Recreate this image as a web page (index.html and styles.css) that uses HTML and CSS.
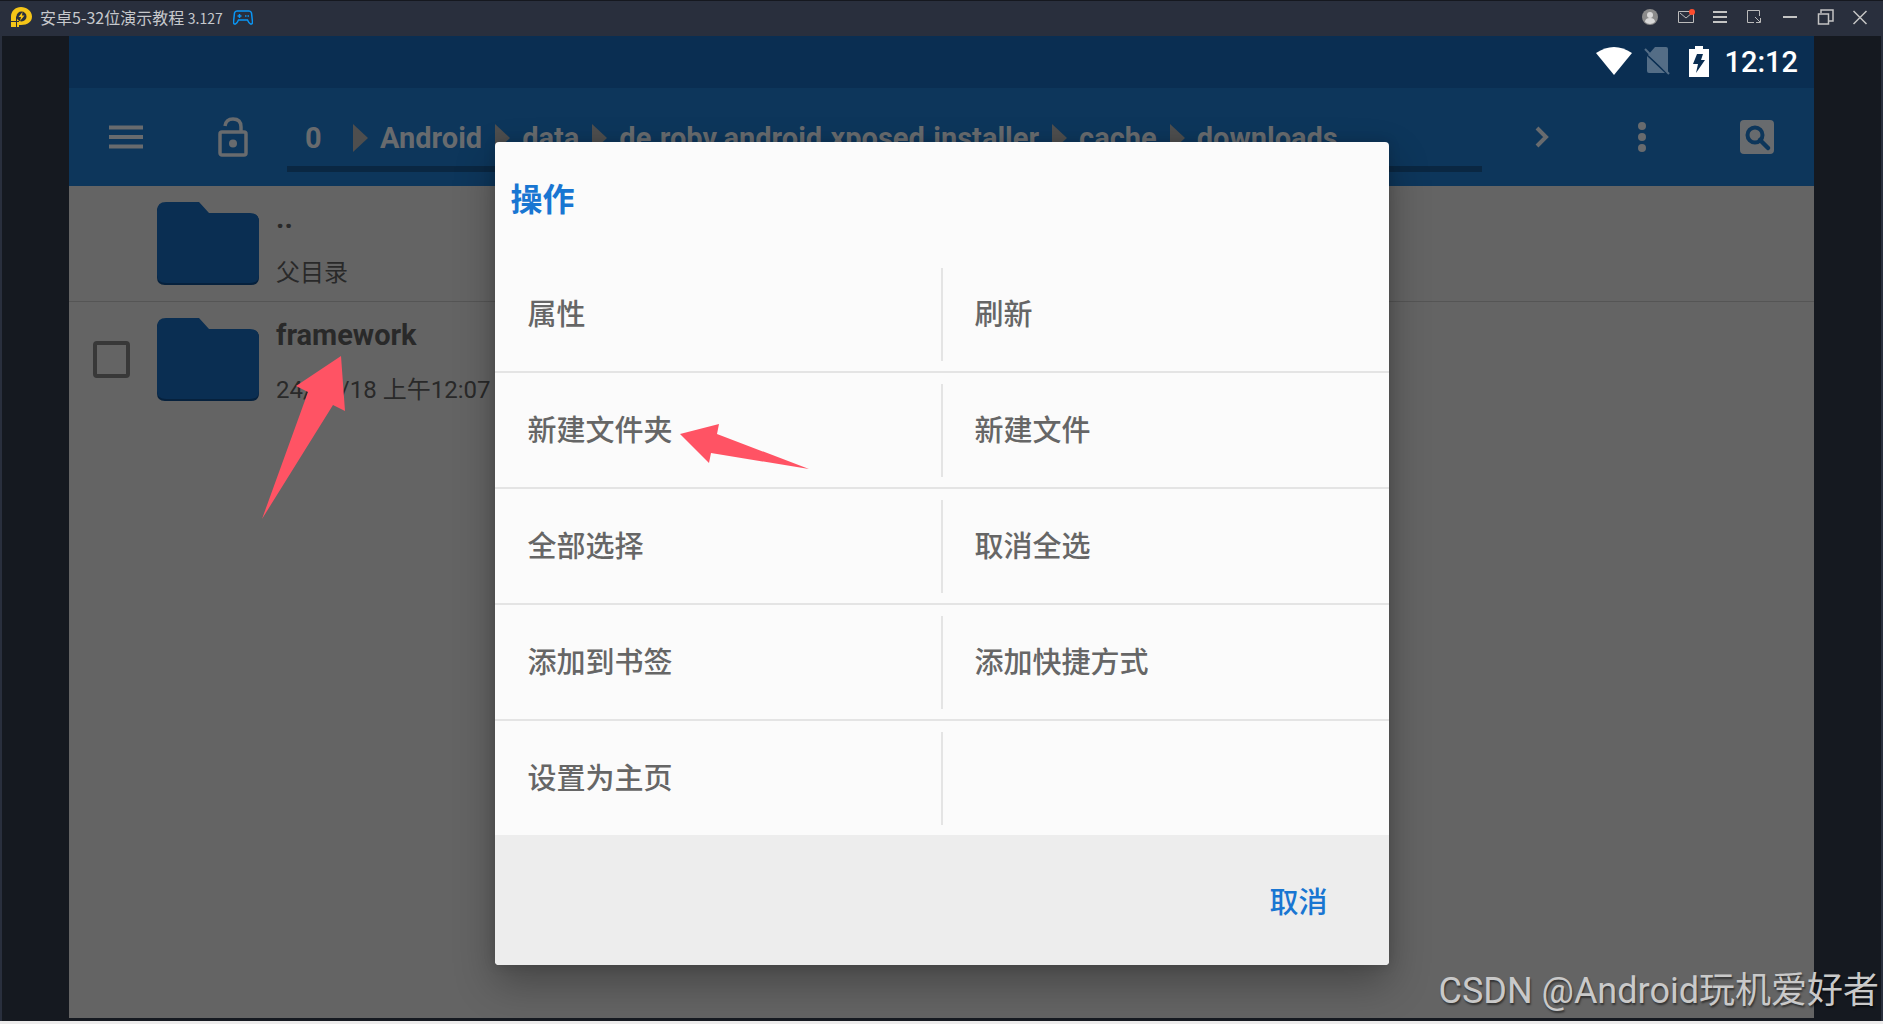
FILE: index.html
```html
<!DOCTYPE html>
<html lang="zh-CN">
<head>
	<meta charset="utf-8">
	<title>安卓5-32位演示教程</title>
	<link rel="stylesheet" href="styles.css">
</head>
<body>
	<header class="titlebar">
		<svg class="logo" viewBox="0 0 22 20">
			<path fill="#f5c518" d="M1 9.500C1 4 5.500 0 11 0S22 4 22 9.500 17.500 18 11 18H9v2H1z"/>
			<path fill="none" stroke="#292f3d" d="M6.500 20V9.500M1 14.500h8"/>
			<circle cx="11.500" cy="9.500" r="5" fill="#292f3d"/>
			<path fill="#f5c518" d="M12.500 5L8.500 10h2.500l-1 4 4.500-5.500H12z"/>
		</svg>
		<span class="title">安卓5-32位演示教程 <small>3.127</small></span>
		<svg class="pad" viewBox="0 0 20 15" fill="none" stroke="#0a96f5" stroke-width="1.500">
			<path d="M4 1h12q2 0 2.500 2l1 9q0 2.500-2 2-1.500-.5-3-4H5.500q-1.500 3.500-3 4-2 .5-2-2l1-9Q2 1 4 1z"/>
			<path d="M6.500 4v4M4.500 6h4M12 6h1.500M14.500 6H16"/>
		</svg>
		<div class="winbtns">
			<button aria-label="用户"><svg viewBox="0 0 20 20"><circle cx="10" cy="10" r="8" fill="#8b8b8b"/><circle cx="10" cy="8" r="3" fill="#d8d8d8"/><path fill="#d8d8d8" d="M5 15q0-4 5-4t5 4q-5 4-10 0z"/></svg></button>
			<button aria-label="消息"><svg viewBox="0 0 20 20"><path d="M3.500 4.500h15v11h-15zM5 6l6 5 6-5" fill="none" stroke="#bbb"/><circle cx="17" cy="5" r="3" fill="#ff4d2e"/></svg></button>
			<button aria-label="菜单"><svg viewBox="0 0 20 20"><path d="M3 5h14M3 10h14M3 15h14" stroke="#c4c4c4" stroke-width="2"/></svg></button>
			<button aria-label="全屏"><svg viewBox="0 0 20 20"><path d="M9 15.500H2.500v-12h12V9M10 10l5 5M11 15.500h4.500V11" fill="none" stroke="#bbb"/></svg></button>
			<button aria-label="最小化"><svg viewBox="0 0 20 20"><path d="M3 10h14" stroke="#c4c4c4" stroke-width="2"/></svg></button>
			<button aria-label="还原"><svg viewBox="0 0 20 20"><path d="M3.500 7h10v10h-10zM6 6V3h12v11h-4" fill="none" stroke="#c4c4c4" stroke-width="1.500"/></svg></button>
			<button aria-label="关闭"><svg viewBox="0 0 20 20"><path d="M3.500 4l13 13M16.500 4l-13 13" stroke="#c4c4c4" stroke-width="1.500"/></svg></button>
		</div>
	</header>

	<div class="stage">
		<div class="device">
			<div class="statusbar">
				<svg class="wifi" viewBox="0 0 36 28"><path fill="#fff" d="M0 6Q18-6 36 6L18 28z"/></svg>
				<svg class="sim" viewBox="0 0 26 28"><path fill="#546d86" d="M4 8L11 0h11q2 0 2 2v24zM3 9l18 17H5q-2 0-2-2z"/><path d="M1 2l24 25" stroke="#546d86" stroke-width="2"/></svg>
				<svg class="battery" viewBox="0 0 20 31"><path fill="#fff" d="M0 3h6V0h8v3h6v28H0z"/><path fill="#0a2e52" d="M8 8h6l-2 6h4L7 27l2-9H4z"/></svg>
				<span class="clock">12:12</span>
			</div>

			<div class="screen">
				<div class="toolbar">
					<button aria-label="侧栏"><svg width="34" height="24" viewBox="0 0 34 24"><path d="M0 2.500h34M0 12h34M0 21.500h34" stroke="#686b6e" stroke-width="4"/></svg></button>
					<button class="lock" aria-label="锁定"><svg width="30" height="40" viewBox="0 0 30 40" fill="none" stroke="#686b6e" stroke-width="3.500"><rect x="2" y="15" width="26" height="23" rx="2"/><path d="M7 9q1-7 8-7 8 0 8 8v5"/><circle cx="15" cy="26.500" r="4" fill="#686b6e" stroke="none"/></svg></button>
					<nav class="crumbs">
						<a class="root" href="#">0</a>
						<a href="#">Android</a>
						<a href="#">data</a>
						<a href="#">de.robv.android.xposed.installer</a>
						<a href="#">cache</a>
						<a href="#">downloads</a>
					</nav>
					<div class="tools">
						<button aria-label="前进"><svg width="34" height="34" viewBox="0 0 34 34"><path d="M12 8l9 9-9 9" fill="none" stroke="#686b6e" stroke-width="4"/></svg></button>
						<button aria-label="更多"><svg width="34" height="34" viewBox="0 0 34 34" fill="#686b6e"><circle cx="17" cy="6" r="4"/><circle cx="17" cy="17" r="4"/><circle cx="17" cy="28" r="4"/></svg></button>
						<button class="search" aria-label="搜索"><svg width="34" height="34" viewBox="0 0 34 34"><rect width="34" height="34" rx="4" fill="#686b6e"/><circle cx="15" cy="15" r="7.500" fill="none" stroke="#0d365b" stroke-width="4"/><path d="M20 20l8 8" stroke="#0d365b" stroke-width="4.500" stroke-linecap="round"/></svg></button>
					</div>
				</div>

				<ul class="files">
					<li>
						<span class="check"></span>
						<svg class="folder" viewBox="0 0 102 83"><path fill="#06213d" d="M8 2h34l10 10h42q8 0 8 8v55q0 8-8 8H8q-8 0-8-8V10q0-8 8-8z"/><path fill="#0a2e52" d="M9 0h33l10 11h41q9 0 9 9v53q0 8-9 8H9q-9 0-9-8V9q0-9 9-9z"/></svg>
						<div class="info">
							<b>..</b>
							<span>父目录</span>
						</div>
					</li>
					<li>
						<span class="check"><input type="checkbox" aria-label="framework"></span>
						<svg class="folder" viewBox="0 0 102 83"><path fill="#06213d" d="M8 2h34l10 10h42q8 0 8 8v55q0 8-8 8H8q-8 0-8-8V10q0-8 8-8z"/><path fill="#0a2e52" d="M9 0h33l10 11h41q9 0 9 9v53q0 8-9 8H9q-9 0-9-8V9q0-9 9-9z"/></svg>
						<div class="info">
							<b>framework</b>
							<span>24/12/18 上午12:07</span>
						</div>
						<svg class="arrow arrow-up" viewBox="0 0 84 164"><path fill="#ff5364" d="M79 0l4 55-12-6L0 163 46 36l-12-6z"/></svg>
					</li>
				</ul>

				<div class="overlay">
					<div class="dialog" role="dialog" aria-labelledby="dlgTitle">
						<h2 id="dlgTitle">操作</h2>
						<div class="actions">
							<button>属性</button>
							<button>刷新</button>
							<button>新建文件夹
								<svg class="arrow arrow-left" viewBox="0 0 130 46"><path fill="#ff5364" d="M0 10L39 0l-2 10 92 35-98-16-2 10z"/></svg>
							</button>
							<button>新建文件</button>
							<button>全部选择</button>
							<button>取消全选</button>
							<button>添加到书签</button>
							<button>添加快捷方式</button>
							<button>设置为主页</button>
							<span class="empty"></span>
						</div>
						<div class="footer">
							<button class="cancel">取消</button>
						</div>
					</div>
				</div>
			</div>
		</div>
	</div>
	<div class="watermark">CSDN @Android玩机爱好者</div>
</body>
</html>
```

FILE: styles.css
```css
* {
	box-sizing: border-box;
}
body {
	margin: 0;
	height: 100vh;
	display: flex;
	flex-direction: column;
	position: relative;
	overflow: hidden;
	background: #151920;
	border-bottom: 3px solid #ecebeb;
	font-family: Roboto, "Noto Sans CJK SC", sans-serif;
}
button {
	border: 0;
	padding: 0;
	background: none;
	font-family: inherit;
	cursor: pointer;
}
svg {
	display: block;
}

/* emulator window */
.titlebar {
	display: flex;
	align-items: center;
	height: 36px;
	padding: 0 13px 3px 10px;
	border-top: 1px solid #15181f;
	background: #292f3d;
	color: #c6c8cc;
}
.logo {
	width: 22px;
	height: 20px;
}
.title {
	margin-left: 8px;
	font: 16px/24px "Noto Sans CJK SC", sans-serif;
}
.title small {
	font-size: 14px;
}
.pad {
	width: 20px;
	height: 15px;
	margin-left: 10px;
}
.winbtns {
	display: flex;
	gap: 15px;
	margin-left: auto;
}
.winbtns svg {
	width: 20px;
	height: 20px;
}
.stage {
	flex: 1;
	display: flex;
	padding: 0 67px 3px;
	border: solid #292f3d;
	border-width: 0 2px;
}
.device {
	flex: 1;
	display: flex;
	flex-direction: column;
	background: #646464;
}

/* android status bar */
.statusbar {
	display: flex;
	align-items: center;
	justify-content: flex-end;
	height: 52px;
	padding: 0 16px 2px 0;
	background: #0a2e52;
	color: #fff;
}
.wifi {
	width: 36px;
	height: 28px;
}
.sim {
	width: 26px;
	height: 28px;
	margin-left: 12px;
}
.battery {
	width: 20px;
	height: 31px;
	margin: 0 15px 0 19px;
}
.clock {
	padding-top: 2px;
	font-size: 29px;
	font-weight: 500;
}

/* file manager */
.screen {
	flex: 1;
	position: relative;
	overflow: hidden;
}
.toolbar {
	display: flex;
	align-items: center;
	height: 98px;
	padding: 0 40px;
	background: #0d365b;
}
.lock {
	margin: 0 39px 0 75px;
}
.crumbs {
	flex: 1;
	display: flex;
	align-items: flex-end;
	align-self: flex-end;
	height: 84px;
	margin-bottom: 14px;
	padding: 0 16px 12px 18px;
	border-bottom: 6px solid #0a2742;
}
.crumbs a {
	display: flex;
	align-items: center;
	color: #686b6e;
	font-size: 29px;
	font-weight: bold;
	line-height: 32px;
	text-decoration: none;
}
.crumbs a + a::before {
	content: "";
	margin: 0 12px 0 13px;
	border: solid transparent;
	border-width: 14px 0 14px 15px;
	border-left-color: #4e4e4e;
}
.crumbs .root {
	min-width: 35px;
}
.tools {
	display: flex;
	gap: 66px;
	margin-left: 43px;
}
.search {
	margin-left: 15px;
}
.files {
	margin: 0;
	padding: 0;
	list-style: none;
}
.files li {
	display: flex;
	align-items: center;
	position: relative;
	height: 116px;
	padding-bottom: 1px;
}
.files li:first-child {
	border-bottom: 1px solid #555;
}
.check {
	width: 88px;
	padding-left: 24px;
}
.check input {
	display: block;
	appearance: none;
	width: 37px;
	height: 37px;
	margin: 0;
	border: 4px solid #383838;
	border-radius: 4px;
}
.folder {
	width: 102px;
	height: 83px;
}
.info {
	display: flex;
	flex-direction: column;
	gap: 19px;
	margin-left: 17px;
	padding-top: 5px;
	color: #292929;
}
.info b {
	font-size: 29px;
	line-height: 36px;
}
.info span {
	font-size: 24px;
	line-height: 36px;
}

/* dialog */
.overlay {
	position: absolute;
	inset: 0;
	display: flex;
	align-items: center;
	justify-content: center;
}
.dialog {
	width: 90%;
	max-width: 894px;
	border-radius: 4px;
	background: #fbfbfb;
	box-shadow: 0 18px 40px rgba(0, 0, 0, 0.3), 0 0 12px rgba(0, 0, 0, 0.15);
}
.dialog h2 {
	margin: 0;
	padding: 34px 16px 33px;
	color: #1976d2;
	font-size: 32px;
	line-height: 48px;
}
.actions {
	display: grid;
	grid-template-columns: 1fr 1fr;
}
.actions > * {
	position: relative;
	height: 116px;
	padding: 0 33px 3px;
	border-bottom: 2px solid #e4e4e4;
	color: #666;
	font-size: 29px;
	font-weight: 500;
	text-align: left;
}
.actions > :nth-child(n+9) {
	height: 114px;
	border-bottom: 0;
}
.actions > :nth-child(odd)::after {
	content: "";
	position: absolute;
	top: 11px;
	bottom: 10px;
	right: -1px;
	width: 2px;
	background: #e4e4e4;
}
.footer {
	display: flex;
	align-items: center;
	justify-content: flex-end;
	height: 130px;
	padding: 0 61px;
	border-radius: 0 0 4px 4px;
	background: #ededed;
}
.cancel {
	color: #1976d2;
	font-size: 29px;
	font-weight: 500;
}

/* marker arrows */
.arrow {
	position: absolute;
}
.arrow-up {
	left: 193px;
	top: 54px;
	width: 84px;
	height: 164px;
}
.arrow-left {
	left: 185px;
	top: 51px;
	width: 130px;
	height: 46px;
}
.watermark {
	position: absolute;
	right: 4px;
	bottom: 3px;
	color: #c9c9c9;
	font-size: 36px;
	line-height: 54px;
	text-shadow: 1px 2px 2px rgba(0, 0, 0, 0.5);
}
```
